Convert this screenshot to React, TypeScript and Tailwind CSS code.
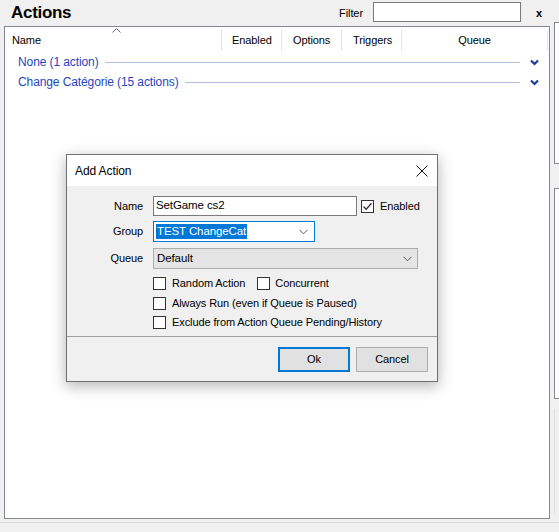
import React from "react";

const font = { fontFamily: '"Segoe UI", "Liberation Sans", Arial, sans-serif' };

function Check({ checked }: { checked?: boolean }) {
  return (
    <span className="w-[13px] h-[13px] border border-[#333333] bg-white flex items-center justify-center shrink-0">
      {checked && (
        <svg width="11" height="11" viewBox="0 0 11 11">
          <path d="M1.5 5.5 L4.2 8.2 L9.5 2.2" fill="none" stroke="#333" strokeWidth="1.3" />
        </svg>
      )}
    </span>
  );
}

function Chevron({ color = "#555" }: { color?: string }) {
  return (
    <svg width="9" height="6" viewBox="0 0 9 6">
      <path d="M0.5 0.8 L4.5 4.8 L8.5 0.8" fill="none" stroke={color} strokeWidth="1" />
    </svg>
  );
}

function GroupRow({ label }: { label: string }) {
  return (
    <div className="flex items-center h-[20px] pl-[13px] pr-[9px]">
      <span className="text-[#1f45c0] text-[12px] whitespace-nowrap">{label}</span>
      <div className="flex-1 h-px bg-[#b0bedf] ml-[6px] mr-[10px]" />
      <svg width="9" height="7" viewBox="0 0 9 7" className="mr-[1px]">
        <path d="M1 1.5 L4.5 5 L8 1.5" fill="none" stroke="#1e3a9e" strokeWidth="2.2" />
      </svg>
    </div>
  );
}

export default function App() {
  return (
    <div className="w-[559px] h-[532px] bg-[#f0f0f0] relative overflow-hidden text-[11px] tracking-[-0.1px] text-black" style={font}>
      <div className="flex h-[522px]">
        {/* Left main */}
        <div className="w-[554px] flex flex-col">
          <div className="h-[26px] flex items-start">
            <span className="ml-[11px] mt-[1px] text-[17px] font-bold leading-[24px] tracking-[-0.3px]">Actions</span>
            <span className="ml-auto mt-[5px] leading-[16px]">Filter</span>
            <div className="ml-[10px] mt-[2px] w-[148px] h-[20px] bg-white border border-[#7a7a7a]" />
            <span className="ml-[15px] mr-[12px] mt-[5px] leading-[16px] font-bold text-[11px]">x</span>
          </div>
          <div className="ml-[4px] w-[546px] h-[493px] border border-[#828790] bg-white flex flex-col">
            {/* header */}
            <div className="relative flex h-[25px] items-end pb-[1px]">
              <span className="absolute left-[107px] top-[1px]">
                <svg width="9" height="5" viewBox="0 0 9 5">
                  <path d="M0.5 4.5 L4.5 0.5 L8.5 4.5" fill="none" stroke="#666" strokeWidth="1" />
                </svg>
              </span>
              <div className="w-[217px] pl-[7px] h-[22px] flex items-center border-r border-[#e5e5e5]">Name</div>
              <div className="w-[60px] pl-[10px] h-[22px] flex items-center border-r border-[#e5e5e5]">Enabled</div>
              <div className="w-[60px] pl-[11px] h-[22px] flex items-center border-r border-[#e5e5e5]">Options</div>
              <div className="w-[60px] pl-[11px] h-[22px] flex items-center border-r border-[#e5e5e5]">Triggers</div>
              <div className="w-[146px] h-[22px] flex items-center justify-center border-r border-[#e5e5e5]">Queue</div>
            </div>
            <GroupRow label="None (1 action)" />
            <GroupRow label="Change Catégorie (15 actions)" />
          </div>
        </div>
        {/* Right partial panels */}
        <div className="flex-1 flex flex-col pt-[22px]">
          <div className="h-[142px] border-l border-t border-b border-[#828790] bg-white" />
          <div className="h-[24px]" />
          <div className="h-[211px] border-l border-t border-b border-[#828790] bg-white" />
          <div className="h-[10px]" />
          <div className="h-[105px] border-l border-[#dcdcdc]" />
        </div>
      </div>
      <div className="h-px bg-[#d9d9d9]" />

      {/* Dialog */}
      <div className="absolute left-[66px] top-[154px] w-[372px] h-[228px] border border-[#6f6f6f] bg-[#f0f0f0] shadow-[0_4px_14px_rgba(0,0,0,0.3)] flex flex-col">
        <div className="h-[31px] bg-white flex items-center pl-[8px] pr-[9px]">
          <span className="text-[12px]">Add Action</span>
          <svg className="ml-auto" width="12" height="12" viewBox="0 0 12 12">
            <path d="M0.5 0.5 L11.5 11.5 M11.5 0.5 L0.5 11.5" stroke="#111" strokeWidth="1" />
          </svg>
        </div>
        <div className="flex flex-col pt-[10px] pl-[6px]">
          <div className="flex items-center h-[20px]">
            <span className="w-[70px] text-right">Name</span>
            <div className="ml-[10px] w-[204px] h-[20px] bg-white border border-[#7a7a7a] flex items-center pl-[2px] text-[11.5px]">SetGame cs2</div>
            <div className="ml-[4px] flex items-center">
              <Check checked />
              <span className="ml-[6px]">Enabled</span>
            </div>
          </div>
          <div className="flex items-center h-[21px] mt-[5px]">
            <span className="w-[70px] text-right">Group</span>
            <div className="ml-[10px] w-[162px] h-[21px] bg-white border border-[#0078d7] flex items-center pl-[2px] pr-[6px]">
              <span className="bg-[#0078d7] text-white leading-[15px] px-[1px] text-[11.5px]">TEST ChangeCat</span>
              <span className="ml-auto"><Chevron /></span>
            </div>
          </div>
          <div className="flex items-center h-[21px] mt-[6px]">
            <span className="w-[70px] text-right">Queue</span>
            <div className="ml-[10px] w-[265px] h-[21px] bg-[#e5e5e5] border border-[#adadad] flex items-center pl-[3px] pr-[5px]">
              <span className="text-[11.5px]">Default</span>
              <span className="ml-auto"><Chevron /></span>
            </div>
          </div>
          <div className="flex items-center h-[14px] mt-[7px] ml-[80px]">
            <Check />
            <span className="ml-[6px]">Random Action</span>
            <span className="ml-[12px]"><Check /></span>
            <span className="ml-[5px]">Concurrent</span>
          </div>
          <div className="flex items-center h-[14px] mt-[6px] ml-[80px]">
            <Check />
            <span className="ml-[6px]">Always Run (even if Queue is Paused)</span>
          </div>
          <div className="flex items-center h-[14px] mt-[5px] ml-[80px]">
            <Check />
            <span className="ml-[6px]">Exclude from Action Queue Pending/History</span>
          </div>
        </div>
        <div className="h-px bg-[#a0a0a0] mt-[7px]" />
        <div className="flex justify-end pr-[9px] mt-[10px] gap-[6px]">
          <button className="w-[72px] h-[25px] bg-[#e1e1e1] border-2 border-[#0078d7] flex items-center justify-center">Ok</button>
          <button className="w-[72px] h-[25px] bg-[#e1e1e1] border border-[#adadad] flex items-center justify-center">Cancel</button>
        </div>
      </div>
    </div>
  );
}
